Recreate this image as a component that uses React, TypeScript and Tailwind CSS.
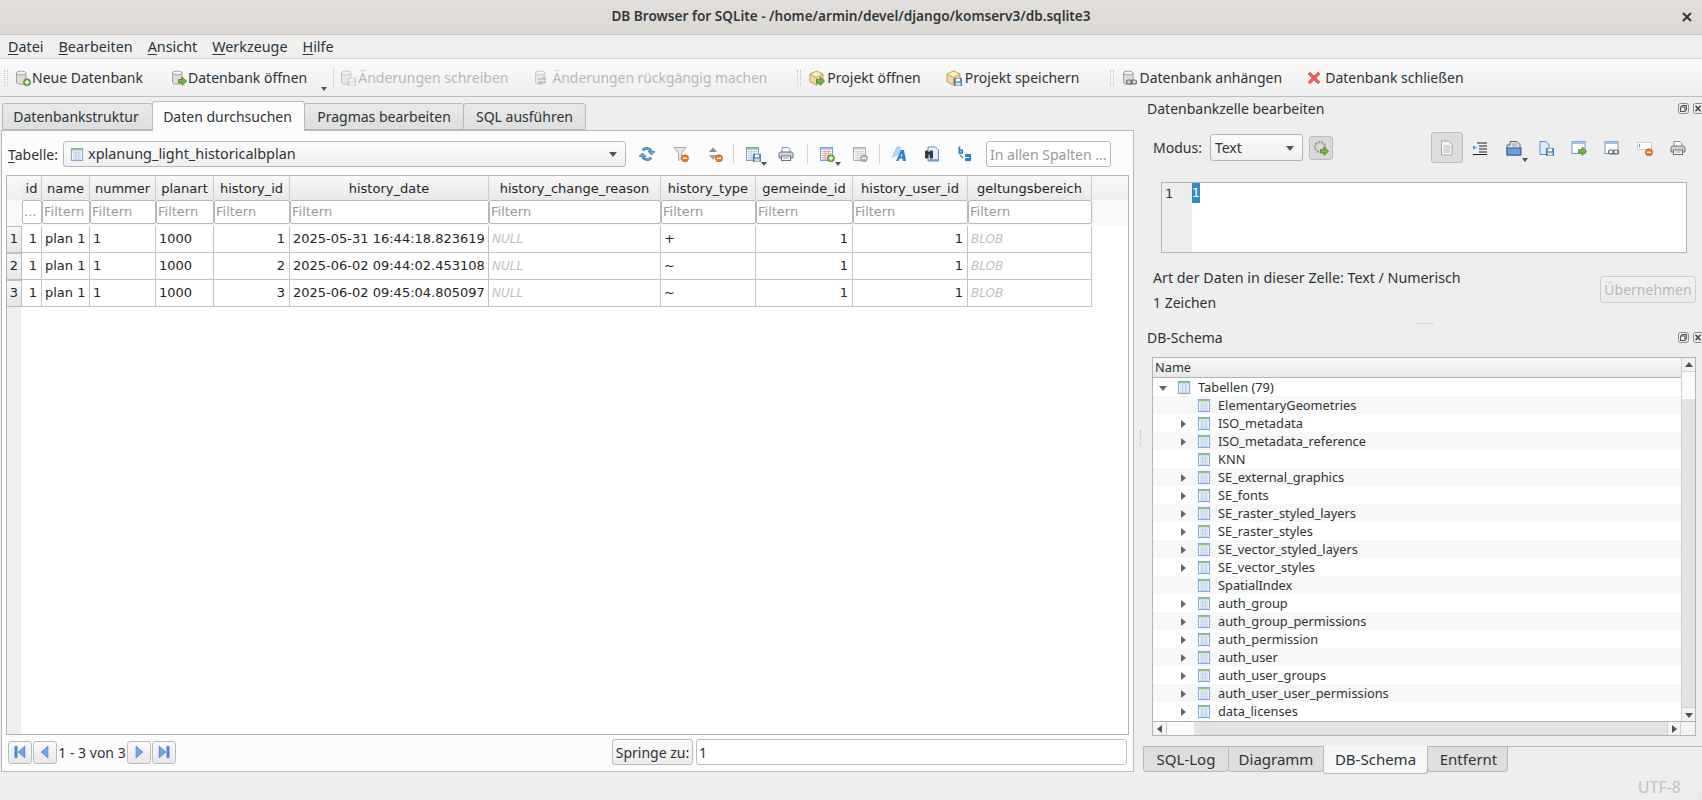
import React from 'react';

// small triangle arrows used by combos, scrollbars and tree rows
const Tri = ({ dir, className = '', color = '#555' }: { dir: 'up' | 'down' | 'left' | 'right'; className?: string; color?: string }) => {
  const pts = { up: '0,6 8,6 4,1', down: '0,2 8,2 4,7', left: '6,0 6,8 1,4', right: '2,0 2,8 7,4' }[dir];
  return (
    <svg viewBox="0 0 8 8" className={`w-[8px] h-[8px] shrink-0 ${className}`}>
      <polygon points={pts} fill={color} />
    </svg>
  );
};

const DropMark = ({ className = '' }: { className?: string }) => (
  <svg viewBox="0 0 6 4" className={`w-[6px] h-[4px] shrink-0 self-end mb-[1px] ${className}`}>
    <polygon points="0,0 6,0 3,4" fill="#555" />
  </svg>
);

const Ic = ({ children, className = '' }: { children: React.ReactNode; className?: string }) => (
  <svg viewBox="0 0 16 16" className={`w-[16px] h-[16px] shrink-0 ${className}`}>
    {children}
  </svg>
);

const Cyl = ({ fade = false }: { fade?: boolean }) => (
  <g opacity={fade ? 0.5 : 1}>
    <path d="M1.5 3v9.5c0 1 2 1.8 4.8 1.8s4.7-.8 4.7-1.8V3z" fill="#dcdcdc" stroke="#8e8e8e" strokeWidth="0.8" />
    <ellipse cx="6.25" cy="3" rx="4.75" ry="1.9" fill="#f4f4f4" stroke="#8e8e8e" strokeWidth="0.8" />
  </g>
);

const GreenArrow = () => <path d="M7.5 9.5h3.5V7l4.6 4.2-4.6 4.3v-2.5H7.5z" fill="#74b739" stroke="#3f7a18" strokeWidth="0.7" />;

const Badge = ({ color, edge, mark }: { color: string; edge: string; mark: 'plus' | 'minus' }) => (
  <>
    <circle cx="12" cy="12.3" r="3.5" fill={color} stroke={edge} strokeWidth="0.7" />
    <path d={mark === 'plus' ? 'M10 12.3h4M12 10.3v4' : 'M10 12.3h4'} stroke="#fff" strokeWidth="1.4" />
  </>
);

const Floppy = ({ x = 8, y = 8, gray = false }: { x?: number; y?: number; gray?: boolean }) => (
  <g transform={`translate(${x} ${y})`}>
    <rect x="0.4" y="0.4" width="7.4" height="7.4" rx="0.6" fill={gray ? '#d0d0d0' : '#5f8fd0'} stroke={gray ? '#999' : '#35609f'} strokeWidth="0.8" />
    <rect x="2" y="0.6" width="4" height="2.6" fill="#fff" />
    <rect x="1.7" y="4.6" width="4.8" height="3" fill={gray ? '#eee' : '#cfe7b0'} />
  </g>
);

const Chain = () => (
  <g fill="none" stroke="#666" strokeWidth="1.2">
    <rect x="4.5" y="10" width="5.5" height="4" rx="2" />
    <rect x="9" y="10" width="5.5" height="4" rx="2" />
  </g>
);

const TableGlyph = ({ lines = '#a9c4e6', top = '#8ccb6e', edge = '#7ba0d0' }: { lines?: string; top?: string; edge?: string }) => (
  <>
    <rect x="1.5" y="1.5" width="12" height="13" fill="#f3f7fd" stroke={edge} />
    <rect x="2" y="2" width="11" height="1.6" fill={top} />
    <path d="M3 5.5h9M3 7.5h9M3 9.5h9M3 11.5h9M3 13.3h9M6 4.5v9M9.5 4.5v9" stroke={lines} strokeWidth="0.7" />
  </>
);

const TableIc = ({ className = '' }: { className?: string }) => (
  <svg viewBox="0 0 15 16" className={`w-[14px] h-[15px] shrink-0 ${className}`}>
    <TableGlyph />
  </svg>
);

const Cube = () => (
  <>
    <path d="M7.5 1 14 4.2v7.6L7.5 15 1 11.8V4.2z" fill="#f3d79a" stroke="#b98a3a" strokeWidth="0.8" />
    <path d="M1 4.2 7.5 7.4 14 4.2M7.5 7.4V15" fill="none" stroke="#c9a050" strokeWidth="0.7" />
    <path d="M7.5 1 14 4.2 7.5 7.4 1 4.2z" fill="#fbeecb" stroke="#b98a3a" strokeWidth="0.6" />
  </>
);

const Printer = () => (
  <>
    <path d="M4 1.5h6l2 2V7H4z" fill="#fff" stroke="#6d8fc0" />
    <path d="M1 8c0-1.2.8-2 2-2h10c1.2 0 2 .8 2 2v4H1z" fill="#cfd3d8" stroke="#6b7078" />
    <rect x="3.5" y="10" width="9" height="4.5" fill="#fff" stroke="#6b7078" />
    <path d="M5 12h6" stroke="#999" />
  </>
);

const GrayDoc = () => (
  <>
    <path d="M2.5 1h7L13 4.500V15H2.500z" fill="#f7f7f7" stroke="#a8a8a8" />
    <path d="M4.500 6H11M4.500 8H11M4.500 10H11M4.500 12H11" stroke="#b4b4b4" />
  </>
);

const toolbarText = 'text-[14px] leading-none text-[#2e3436] whitespace-nowrap';
const disabledText = 'leading-none text-[#b8b8b8] whitespace-nowrap';

const Grip = ({ className = '' }: { className?: string }) => (
  <div className={`w-[4px] h-[16px] shrink-0 border-x border-dotted border-[#c4c4c4] ${className}`} />
);

const Sep = ({ className = '' }: { className?: string }) => <div className={`w-px h-[20px] shrink-0 bg-[#d6d6d6] ${className}`} />;

const Tab = ({ label, active, className = '' }: { label: string; active?: boolean; className?: string }) => (
  <div
    className={`flex items-center justify-center border border-[#b9b9b9] rounded-t-[3px] text-[14px] text-[#2e3436] whitespace-nowrap ${
      active ? 'h-[30px] bg-[#fcfcfc] border-b-0 relative z-10 -mb-px' : 'h-[27px] bg-gradient-to-b from-[#e9e9e9] to-[#dedede] -ml-px'
    } ${className}`}
  >
    {label}
  </div>
);

const columns = [
  { name: 'id', filter: '...' },
  { name: 'name', filter: 'Filtern' },
  { name: 'nummer', filter: 'Filtern' },
  { name: 'planart', filter: 'Filtern' },
  { name: 'history_id', filter: 'Filtern' },
  { name: 'history_date', filter: 'Filtern' },
  { name: 'history_change_reason', filter: 'Filtern' },
  { name: 'history_type', filter: 'Filtern' },
  { name: 'gemeinde_id', filter: 'Filtern' },
  { name: 'history_user_id', filter: 'Filtern' },
  { name: 'geltungsbereich', filter: 'Filtern' },
];

const rows = [
  ['1', 'plan 1', '1', '1000', '1', '2025-05-31 16:44:18.823619', 'NULL', '+', '1', '1', 'BLOB'],
  ['1', 'plan 1', '1', '1000', '2', '2025-06-02 09:44:02.453108', 'NULL', '~', '1', '1', 'BLOB'],
  ['1', 'plan 1', '1', '1000', '3', '2025-06-02 09:45:04.805097', 'NULL', '~', '1', '1', 'BLOB'],
];

const rightAligned = [0, 4, 8, 9];
const gridCols = 'grid grid-cols-[15px_20px_48px_66px_58px_76px_199px_172px_95px_97px_115px_124px]';

const DataTable = () => (
  <div className="mx-[4px] h-[560px] border border-[#b4b4b4] bg-white flex flex-col font-['DejaVu_Sans',sans-serif] text-[13px] text-[#262626] overflow-hidden">
    <div className="bg-gradient-to-b from-[#f7f7f7] to-[#efefef] h-[24px]">
      <div className={`${gridCols} h-[24px]`}>
        <div />
        {columns.map((c) => (
          <div key={c.name} className="flex items-center justify-center border-r border-[#cdcdcd] bg-gradient-to-b from-[#f7f7f7] to-[#e9e9e9] whitespace-nowrap overflow-hidden pt-px">
            {c.name}
          </div>
        ))}
      </div>
    </div>
    <div className="bg-[#f8f8f8] h-[26px]">
      <div className={`${gridCols} h-[26px]`}>
        <div />
        {columns.map((c) => (
          <div key={c.name} className="h-[24px] bg-white border border-[#b8b8b8] rounded-[2px] flex items-center pl-[1px] text-[#9a9a9a] overflow-hidden">
            {c.filter}
          </div>
        ))}
      </div>
    </div>
    {rows.map((row, r) => (
      <div key={r} className={`${gridCols} h-[27px]`}>
        <div className="flex items-center justify-center border border-l-0 border-[#bdbdbd] bg-gradient-to-b from-[#f7f7f7] to-[#e6e6e6] pb-px">{r + 1}</div>
        {row.map((cell, i) => (
          <div
            key={i}
            className={`flex items-center border-r border-b border-[#c4c4c4] pl-[3px] pr-[4px] whitespace-nowrap overflow-hidden ${rightAligned.includes(i) ? 'justify-end' : ''} ${
              cell === 'NULL' || cell === 'BLOB' ? 'italic text-[#c0c0c0] text-[12px]' : ''
            }`}
          >
            {cell}
          </div>
        ))}
      </div>
    ))}
    <div className="flex-1 w-[14px] bg-[#efefef]" />
  </div>
);

const NavBtn = ({ dir, className = '' }: { dir: 'first' | 'prev' | 'next' | 'last'; className?: string }) => (
  <div className={`w-[24px] h-[23px] shrink-0 border border-[#bcbcbc] rounded-[3px] bg-gradient-to-b from-[#fafafa] to-[#e8e8e8] flex items-center justify-center ${className}`}>
    <svg viewBox="0 0 12 14" className="w-[12px] h-[14px]">
      {dir === 'first' && (
        <>
          <rect x="0.5" y="1" width="3" height="12" fill="#4a86d8" />
          <polygon points="11,1 11,13 4,7" fill="#6fa5ea" stroke="#3a72c4" strokeWidth="0.5" />
        </>
      )}
      {dir === 'prev' && <polygon points="9,1 9,13 2,7" fill="#6fa5ea" stroke="#3a72c4" strokeWidth="0.5" />}
      {dir === 'next' && <polygon points="3,1 3,13 10,7" fill="#6fa5ea" stroke="#3a72c4" strokeWidth="0.5" />}
      {dir === 'last' && (
        <>
          <rect x="8.5" y="1" width="3" height="12" fill="#4a86d8" />
          <polygon points="1,1 1,13 8,7" fill="#6fa5ea" stroke="#3a72c4" strokeWidth="0.5" />
        </>
      )}
    </svg>
  </div>
);

const DockButtons = () => (
  <div className="flex items-center ml-auto">
    <svg viewBox="0 0 11 11" className="w-[11px] h-[11px]">
      <rect x="0.5" y="0.5" width="10" height="10" rx="2" fill="none" stroke="#8a8a8a" />
      <rect x="4" y="2.5" width="4.5" height="4.5" fill="none" stroke="#555" />
      <rect x="2.5" y="4" width="4.5" height="4.5" fill="#efefef" stroke="#555" />
    </svg>
    <svg viewBox="0 0 9 11" className="w-[9px] h-[11px] ml-[4px]">
      <rect x="0.5" y="0.5" width="10" height="10" rx="2" fill="none" stroke="#8a8a8a" />
      <path d="M2.5 2.8 7.5 8.2M7.5 2.8 2.5 8.2" stroke="#444" strokeWidth="1.5" />
    </svg>
  </div>
);

const tables: [string, boolean][] = [
  ['ElementaryGeometries', false],
  ['ISO_metadata', true],
  ['ISO_metadata_reference', true],
  ['KNN', false],
  ['SE_external_graphics', true],
  ['SE_fonts', true],
  ['SE_raster_styled_layers', true],
  ['SE_raster_styles', true],
  ['SE_vector_styled_layers', true],
  ['SE_vector_styles', true],
  ['SpatialIndex', false],
  ['auth_group', true],
  ['auth_group_permissions', true],
  ['auth_permission', true],
  ['auth_user', true],
  ['auth_user_groups', true],
  ['auth_user_user_permissions', true],
  ['data_licenses', true],
];

const SchemaTree = () => (
  <div className="ml-[18px] mr-[6px] h-[379px] border border-[#b4b4b4] bg-white flex flex-col text-[12.8px] text-[#2e3436]">
    <div className="flex h-[363px]">
      <div className="w-[528px] flex flex-col overflow-hidden">
        <div className="h-[20px] shrink-0 pl-[2px] pt-px flex items-center bg-gradient-to-b from-[#f9f9f9] to-[#e8e8e8] border-b border-[#b4b4b4]">Name</div>
        <div className="h-[18px] shrink-0 flex items-center pl-[6px] pt-px">
          <Tri dir="down" color="#666" />
          <TableIc className="ml-[10px]" />
          <span className="ml-[7px]">Tabellen (79)</span>
        </div>
        {tables.map(([t, arrow], i) => (
          <div key={t} className={`h-[18px] shrink-0 flex items-center pl-[26px] pt-px ${i % 2 === 0 ? 'bg-[#f7f7f7]' : 'bg-white'}`}>
            <div className="w-[8px] shrink-0">{arrow && <Tri dir="right" color="#666" />}</div>
            <TableIc className="ml-[10px]" />
            <span className="ml-[7px] whitespace-nowrap">{t}</span>
          </div>
        ))}
      </div>
      <div className="w-[14px] flex flex-col border-l border-[#cfcfcf] bg-[#e3e3e3]">
        <div className="h-[14px] bg-[#f3f3f3] border-b border-[#cfcfcf] flex items-center justify-center">
          <Tri dir="up" />
        </div>
        <div className="h-[27px] bg-[#fbfbfb]" />
        <div className="flex-1" />
        <div className="h-[14px] bg-[#f3f3f3] border-t border-[#cfcfcf] flex items-center justify-center">
          <Tri dir="down" />
        </div>
      </div>
    </div>
    <div className="flex flex-1 border-t border-[#b4b4b4] bg-[#e3e3e3]">
      <div className="w-[14px] bg-[#f3f3f3] flex items-center justify-center border-r border-[#cfcfcf]">
        <Tri dir="left" />
      </div>
      <div className="w-[27px] bg-[#fbfbfb]" />
      <div className="flex-1" />
      <div className="w-[14px] bg-[#f3f3f3] flex items-center justify-center border-x border-[#cfcfcf]">
        <Tri dir="right" />
      </div>
      <div className="w-[14px] bg-[#f3f3f3]" />
    </div>
  </div>
);

export default function App() {
  return (
    <div className="w-[1702px] h-[800px] flex flex-col overflow-hidden bg-[#eeeeee] font-['Noto_Sans',sans-serif] text-[#2e3436]">
      {/* Title bar */}
      <div className="h-[35px] shrink-0 flex items-center relative bg-gradient-to-b from-[#e1dedb] to-[#dcd9d5] border-b border-[#c9c2bb]">
        <div className="flex-1 text-center text-[13.6px] font-semibold text-[#33383a] whitespace-nowrap pb-px">DB Browser for SQLite - /home/armin/devel/django/komserv3/db.sqlite3</div>
        <svg viewBox="0 0 10 10" className="absolute right-[10px] top-[12px] w-[10px] h-[10px]">
          <path d="M1 1 9 9M9 1 1 9" stroke="#2e3436" strokeWidth="2" />
        </svg>
      </div>

      {/* Menu bar */}
      <div className="h-[24px] shrink-0 flex items-center pl-[8px] gap-[15px] text-[14.35px] border-b border-[#d9d9d9] bg-[#efefef]">
        {[
          ['D', 'atei'],
          ['B', 'earbeiten'],
          ['A', 'nsicht'],
          ['W', 'erkzeuge'],
          ['H', 'ilfe'],
        ].map(([a, b]) => (
          <span key={b}>
            <span className="underline underline-offset-2">{a}</span>
            {b}
          </span>
        ))}
      </div>

      {/* Main toolbar */}
      <div className="h-[38px] shrink-0 flex items-center bg-gradient-to-b from-[#fafafa] to-[#efefef] border-b border-[#bdbdbd]">
        <Grip className="ml-[4px]" />
        <Ic className="ml-[7px]">
          <Cyl />
          <Badge color="#6fb83a" edge="#3f7a18" mark="plus" />
        </Ic>
        <span className={`${toolbarText} ml-[1px]`}>Neue Datenbank</span>
        <Ic className="ml-[28px]">
          <Cyl />
          <GreenArrow />
        </Ic>
        <span className={`${toolbarText} ml-[1px]`}>Datenbank öffnen</span>
        <DropMark className="ml-[14px] mb-[5px]" />
        <Sep className="ml-[6px]" />
        <Ic className="ml-[6px]">
          <g opacity="0.55">
            <Cyl />
            <Floppy gray />
          </g>
        </Ic>
        <span className={`${disabledText} text-[14px] ml-[2px]`}>Änderungen schreiben</span>
        <Ic className="ml-[26px]">
          <g opacity="0.5">
            <Cyl />
            <path d="M4 9h7l-2-2M12 12H5l2 2" fill="none" stroke="#666" strokeWidth="1.2" />
          </g>
        </Ic>
        <span className={`${disabledText} text-[13.87px] ml-[2px]`}>Änderungen rückgängig machen</span>
        <Grip className="ml-[30px]" />
        <Ic className="ml-[8px]">
          <Cube />
          <GreenArrow />
        </Ic>
        <span className={`${toolbarText} ml-[2px]`}>Projekt öffnen</span>
        <Ic className="ml-[25px]">
          <Cube />
          <Floppy />
        </Ic>
        <span className={`${toolbarText} ml-[3px]`}>Projekt speichern</span>
        <Grip className="ml-[31px]" />
        <Ic className="ml-[8px]">
          <Cyl />
          <Chain />
        </Ic>
        <span className={`${toolbarText} ml-[1px]`}>Datenbank anhängen</span>
        <svg viewBox="0 0 14 14" className="ml-[25px] w-[14px] h-[14px] shrink-0">
          <path d="M1 3 3 1l4 4 4-4 2 2-4 4 4 4-2 2-4-4-4 4-2-2 4-4z" fill="#ef5b5b" stroke="#d94545" strokeWidth="0.5" />
        </svg>
        <span className={`${toolbarText} ml-[4px]`}>Datenbank schließen</span>
      </div>

      <div className="flex-1 flex min-h-0">
        {/* Left tabbed pane */}
        <div className="w-[1134px] shrink-0 pl-[1px] flex flex-col">
          <div className="h-[33px] shrink-0 flex items-end pl-[1px]">
            <Tab label="Datenbankstruktur" className="w-[151px] ml-0 pr-[3px]" />
            <Tab label="Daten durchsuchen" active className="w-[153px] -ml-px pr-[2px]" />
            <Tab label="Pragmas bearbeiten" className="w-[160px]" />
            <Tab label="SQL ausführen" className="w-[123px]" />
          </div>
          <div className="h-[642px] border border-[#b9b9b9] bg-[#fcfcfc] flex flex-col">
            <div className="h-[26px] mt-[10px] shrink-0 flex items-center pl-[6px] text-[14px]">
              <span className="w-[55px] shrink-0">
                <span className="underline underline-offset-2">T</span>abelle:
              </span>
              <div className="w-[563px] h-[26px] shrink-0 border border-[#b9b9b9] rounded-[3px] bg-gradient-to-b from-[#fbfbfb] to-[#f0f0f0] flex items-center pl-[6px] pr-[8px]">
                <TableIc />
                <span className="ml-[4px] text-[14.45px]">xplanung_light_historicalbplan</span>
                <Tri dir="down" className="ml-auto" />
              </div>
              <Ic className="ml-[13px]">
                <path d="M8 1.5a6 6 0 0 1 5.6 4H16L12.5 9 9 5.5h2.3A3.6 3.6 0 0 0 5 5L3 3.4A6 6 0 0 1 8 1.5z" fill="#6aa6e6" stroke="#23629f" strokeWidth="0.7" />
                <path d="M8 14.5a6 6 0 0 1-5.6-4H0L3.5 7 7 10.5H4.7A3.6 3.6 0 0 0 11 11l2 1.6a6 6 0 0 1-5 1.9z" fill="#6aa6e6" stroke="#23629f" strokeWidth="0.7" />
              </Ic>
              <Ic className="ml-[18px]">
                <path d="M1 1.5h12L8.5 7.5v5l-3 2v-7z" fill="#e4e4e4" stroke="#9c9c9c" strokeWidth="0.8" />
                <Badge color="#ee7a22" edge="#b9540f" mark="minus" />
              </Ic>
              <Ic className="ml-[18px]">
                <polygon points="2,6 6,1.5 10,6" fill="#8b8b8b" />
                <polygon points="2,9 10,9 6,14" fill="#a5a5a5" />
                <Badge color="#ee7a22" edge="#b9540f" mark="minus" />
              </Ic>
              <Sep className="ml-[10px]" />
              <Ic className="ml-[11px]">
                <TableGlyph />
                <Floppy />
              </Ic>
              <DropMark />
              <Ic className="ml-[11px]">
                <Printer />
              </Ic>
              <Sep className="ml-[13px]" />
              <Ic className="ml-[11px]">
                <TableGlyph lines="#e08a8a" top="#9ac5e8" />
                <Badge color="#6fb83a" edge="#3f7a18" mark="plus" />
              </Ic>
              <DropMark />
              <Ic className="ml-[11px]">
                <TableGlyph lines="#cccccc" top="#d0d0d0" edge="#b0b0b0" />
                <Badge color="#b5b5b5" edge="#8f8f8f" mark="minus" />
              </Ic>
              <Sep className="ml-[11px]" />
              <Ic className="ml-[12px]">
                <path d="M0 12 5 1h3l1 7" fill="#b8d4f4" stroke="#7fb0e6" strokeWidth="0.6" />
                <path d="M4 15 9 4h3l2 11h-3l-.4-2.500H7.700L6.500 15zM8.500 10.500h1.800l-.4-3z" fill="#2f7fd0" fillRule="evenodd" />
              </Ic>
              <Ic className="ml-[16px]">
                <path d="M4 1h7.500l3 3V15H4z" fill="#e8f1fb" stroke="#5b8fce" />
                <path d="M5 14h9" stroke="#5b8fce" strokeWidth="1.500" />
                <rect x="1" y="4.500" width="3.400" height="8" rx="1" fill="#35393d" />
                <rect x="5.600" y="4.500" width="3.400" height="8" rx="1" fill="#35393d" />
                <rect x="3.500" y="6" width="3" height="2.500" fill="#35393d" />
              </Ic>
              <Ic className="ml-[17px]">
                <path d="M1.500 0.500h1.800V3.500H6v4.500H1.500zM3.300 5v1.500H4.300V5z" fill="#2f7fd0" fillRule="evenodd" />
                <path d="M3 9l3 3" stroke="#5aa53a" strokeWidth="1.500" />
                <path d="M8 8h6v7H8v-3h4V11H8zM10 13h2v.800h-2z" fill="#2f7fd0" />
              </Ic>
              <div className="ml-[13px] w-[125px] h-[26px] shrink-0 border border-[#b9b9b9] rounded-[3px] bg-white flex items-center pl-[3px] text-[#9a9a9a] whitespace-nowrap overflow-hidden">
                In allen Spalten ...
              </div>
            </div>

            <div className="mt-[8px] shrink-0">
              <DataTable />
            </div>

            <div className="h-[26px] mt-[4px] shrink-0 flex items-center pl-[6px] pr-[6px] text-[14px]">
              <NavBtn dir="first" />
              <NavBtn dir="prev" className="ml-px" />
              <span className="w-[70px] text-center whitespace-nowrap">1 - 3 von 3</span>
              <NavBtn dir="next" />
              <NavBtn dir="last" className="ml-px" />
              <div className="ml-auto w-[81px] h-[26px] border border-[#bcbcbc] rounded-[3px] bg-gradient-to-b from-[#fafafa] to-[#ececec] flex items-center justify-center whitespace-nowrap">Springe zu:</div>
              <div className="ml-[3px] w-[431px] h-[26px] border border-[#bcbcbc] rounded-[3px] bg-white flex items-center pl-[2px]">1</div>
            </div>
          </div>
        </div>

        {/* Right docks */}
        <div className="flex-1 min-w-0 flex flex-col text-[14px] relative">
          {/* splitter handle between the panes */}
          <div className="absolute left-[6px] top-[333px] h-[16px] w-[3px] border-l border-dotted border-[#bdbdbd]" />

          <div className="h-[24px] shrink-0 flex items-center pl-[13px] pb-[2px]">
            Datenbankzelle bearbeiten
            <DockButtons />
          </div>

          <div className="h-[31px] mt-[11px] shrink-0 flex items-center pl-[19px]">
            <span>Modus:</span>
            <div className="ml-[8px] w-[93px] h-[27px] border border-[#b4b4b4] rounded-[3px] bg-gradient-to-b from-[#fbfbfb] to-[#f0f0f0] flex items-center pl-[4px] pr-[8px]">
              Text
              <Tri dir="down" className="ml-auto" />
            </div>
            <div className="ml-[6px] w-[24px] h-[24px] border border-[#bcbcbc] rounded-[3px] bg-[#d9d9d9] flex items-center justify-center">
              <Ic>
                <circle cx="7" cy="7" r="5" fill="#d8d8d8" stroke="#9a9a9a" strokeWidth="2" strokeDasharray="2 1" />
                <GreenArrow />
              </Ic>
            </div>
            <div className="ml-[98px] w-[32px] h-[31px] border border-[#bcbcbc] rounded-[3px] bg-[#dcdcdc] flex items-center justify-center">
              <Ic>
                <GrayDoc />
              </Ic>
            </div>
            <Ic className="ml-[9px]">
              <path d="M5 3h10M7 6h8M7 9h8M7 12h8M1 14.500h14" stroke="#222" strokeWidth="1.200" />
              <path d="M1 5.500 5 7.500 1 9.500z" fill="#4f93dc" />
            </Ic>
            <Ic className="ml-[18px]">
              <path d="M1 5h3V1.500h7l3 3V15H1z" fill="#dfe2e6" stroke="#5a6472" />
              <path d="M6 4h5M6 6h5" stroke="#9aa0a8" />
              <rect x="1" y="8" width="14" height="7" fill="#6f9bd8" stroke="#33578f" />
            </Ic>
            <DropMark />
            <Ic className="ml-[10px]">
              <path d="M2 1.500h6l3 3v10H2z" fill="#dfeafa" stroke="#5b8fce" />
              <Floppy />
            </Ic>
            <Ic className="ml-[17px]">
              <rect x="1" y="1.500" width="13" height="12" fill="#fff" stroke="#6f96c8" />
              <rect x="1" y="1.500" width="13" height="2.500" fill="#9fc0e8" />
              <GreenArrow />
            </Ic>
            <Ic className="ml-[17px]">
              <rect x="1" y="1.500" width="13" height="12" fill="#fff" stroke="#6f96c8" />
              <rect x="1" y="1.500" width="13" height="2.500" fill="#9fc0e8" />
              <Chain />
            </Ic>
            <Ic className="ml-[17px]">
              <rect x="0.500" y="2.500" width="14" height="7" fill="#fff" stroke="#d0d0d0" />
              <path d="M2.500 4v3.500" stroke="#999" />
              <Badge color="#ee7a22" edge="#b9540f" mark="minus" />
            </Ic>
            <Ic className="ml-[17px]">
              <Printer />
            </Ic>
          </div>

          <div className="ml-[27px] mr-[15px] mt-[19px] h-[71px] shrink-0 border border-[#b4b4b4] bg-white flex font-['DejaVu_Sans',sans-serif] text-[13px]">
            <div className="w-[30px] h-full bg-[#eeeeee] pl-[3px] pt-px">1</div>
            <div className="w-[8px] h-[20px] bg-[#308cc6] text-white flex items-center justify-center">1</div>
          </div>

          <div className="mt-[12px] h-[50px] shrink-0 flex pl-[19px]">
            <div className="flex-1">
              <div className="h-[25px] flex items-center text-[14.25px]">Art der Daten in dieser Zelle: Text / Numerisch</div>
              <div className="h-[25px] flex items-center">1 Zeichen</div>
            </div>
            <div className="mt-[11px] mr-[6px] w-[96px] h-[27px] border border-[#cfcfcf] rounded-[3px] bg-gradient-to-b from-[#f1f1f1] to-[#ececec] text-[#b8b8b8] flex items-center justify-center">Übernehmen</div>
          </div>

          <div className="h-[16px] shrink-0 flex items-center pl-[283px]">
            <div className="w-[16px] border-t border-dotted border-[#c4c4c4]" />
          </div>

          <div className="h-[14px] shrink-0 flex items-center pl-[13px] pb-[2px]">
            DB-Schema
            <DockButtons />
          </div>

          <div className="mt-[12px] shrink-0">
            <SchemaTree />
          </div>

          <div className="mt-[10px] ml-[9px] h-[28px] shrink-0 border-t border-[#b9b9b9] flex items-start text-[15px]">
            {[
              ['SQL-Log', 'w-[86px]'],
              ['Diagramm', 'w-[96px]'],
            ].map(([t, w]) => (
              <div key={t} className={`${w} h-[26px] -mt-px border border-[#b9b9b9] rounded-b-[3px] bg-[#dedede] flex items-center justify-center ${t === 'Diagramm' ? '-ml-px' : ''}`}>
                {t}
              </div>
            ))}
            <div className="w-[105px] h-[28px] -ml-px -mt-px border border-t-0 border-[#b9b9b9] rounded-b-[3px] bg-[#f6f6f6] flex items-center justify-center">DB-Schema</div>
            <div className="w-[81px] h-[26px] -ml-px -mt-px border border-[#b9b9b9] rounded-b-[3px] bg-[#dedede] flex items-center justify-center pl-[2px]">Entfernt</div>
          </div>

          <div className="flex-1 flex items-end justify-end text-[#c4c4c4] text-[16px]">
            <span className="self-center mr-[12px]">UTF-8</span>
            <svg viewBox="0 0 8 8" className="w-[8px] h-[8px] mb-[1px] mr-px shrink-0">
              <path d="M6.500 1v.8M4 3.500v.8M6.500 3.500v.8M1.500 6v.8M4 6v.8M6.500 6v.8" stroke="#c4c4c4" />
            </svg>
          </div>
        </div>
      </div>
    </div>
  );
}
